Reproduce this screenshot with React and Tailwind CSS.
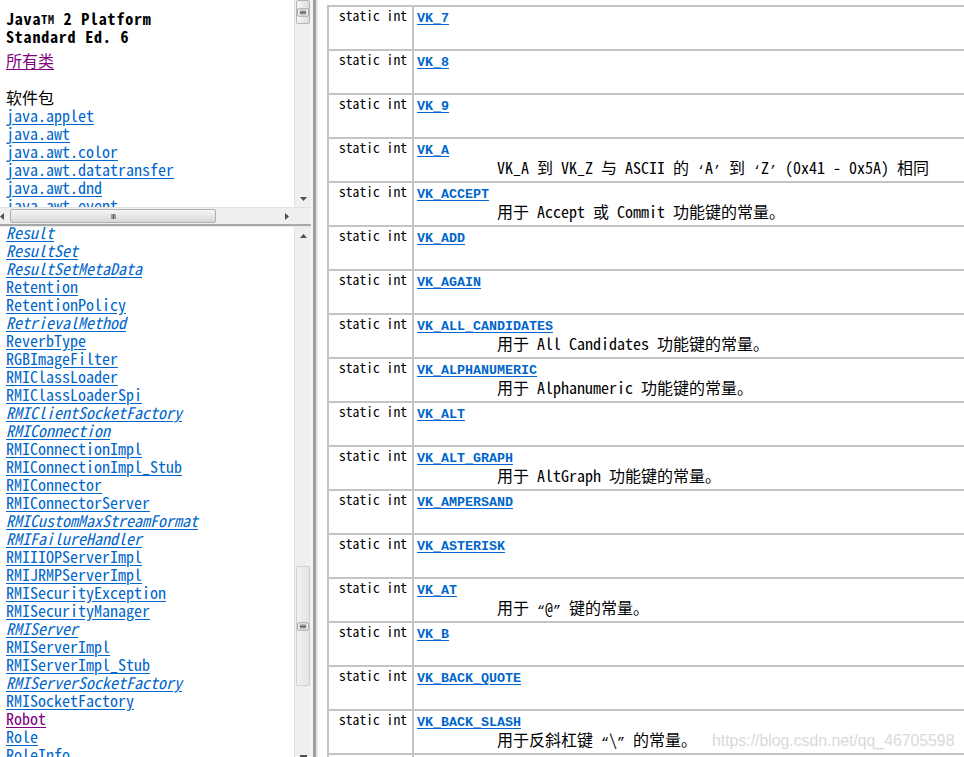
const MONO = "font-['Noto_Sans_Mono_CJK_SC','Liberation_Mono','Noto_Sans_CJK_SC',monospace]";

const classes = [
  ["Result", true], ["ResultSet", true], ["ResultSetMetaData", true], ["Retention"], ["RetentionPolicy"],
  ["RetrievalMethod", true], ["ReverbType"], ["RGBImageFilter"], ["RMIClassLoader"], ["RMIClassLoaderSpi"],
  ["RMIClientSocketFactory", true], ["RMIConnection", true], ["RMIConnectionImpl"], ["RMIConnectionImpl_Stub"],
  ["RMIConnector"], ["RMIConnectorServer"], ["RMICustomMaxStreamFormat", true], ["RMIFailureHandler", true],
  ["RMIIIOPServerImpl"], ["RMIJRMPServerImpl"], ["RMISecurityException"], ["RMISecurityManager"],
  ["RMIServer", true], ["RMIServerImpl"], ["RMIServerImpl_Stub"], ["RMIServerSocketFactory", true],
  ["RMISocketFactory"], ["Robot", false, true], ["Role"], ["RoleInfo"],
];

const packages = ["java.applet", "java.awt", "java.awt.color", "java.awt.datatransfer", "java.awt.dnd", "java.awt.event"];

// narrow quote marks, as the old javadoc font draws them half width
const Q = ({ children }) => <span className="font-['Liberation_Mono',monospace] text-[13.3px]">{children}</span>;

const fields = [
  ["VK_7"], ["VK_8"], ["VK_9"],
  ["VK_A", <>VK_A 到 VK_Z 与 ASCII 的 <Q>‘</Q>A<Q>’</Q> 到 <Q>‘</Q>Z<Q>’</Q> (0x41 - 0x5A) 相同</>],
  ["VK_ACCEPT", "用于 Accept 或 Commit 功能键的常量。"],
  ["VK_ADD"], ["VK_AGAIN"],
  ["VK_ALL_CANDIDATES", "用于 All Candidates 功能键的常量。"],
  ["VK_ALPHANUMERIC", "用于 Alphanumeric 功能键的常量。"],
  ["VK_ALT"],
  ["VK_ALT_GRAPH", "用于 AltGraph 功能键的常量。"],
  ["VK_AMPERSAND"], ["VK_ASTERISK"],
  ["VK_AT", <>用于 <Q>“</Q>@<Q>”</Q> 键的常量。</>],
  ["VK_B"], ["VK_BACK_QUOTE"],
  ["VK_BACK_SLASH", <>用于反斜杠键 <Q>“</Q>\<Q>”</Q> 的常量。</>],
  [""],
];

function Grip({ vertical }) {
  return vertical ? (
    <svg width="13" height="9" viewBox="0 0 13 9">
      <rect x="0.5" y="0.5" width="12" height="8" rx="1.5" fill="#f4f4f4" stroke="#9a9a9a" />
      <path d="M3 3h7M3 4.5h7M3 6h7" stroke="#555" strokeWidth="1" />
    </svg>
  ) : (
    <svg width="9" height="9" viewBox="0 0 9 9">
      <path d="M3 2v5M4.5 2v5M6 2v5" stroke="#555" strokeWidth="1" />
    </svg>
  );
}

function Arrow({ dir }) {
  const d = {
    down: "M0 0h7L3.5 4z",
    up: "M0 4h7L3.5 0z",
    right: "M0 0v7L4 3.5z",
    left: "M4 0v7L0 3.5z",
  }[dir];
  const w = dir === "left" || dir === "right" ? 4 : 7;
  const h = dir === "left" || dir === "right" ? 7 : 4;
  return (
    <svg width={w} height={h} viewBox={`0 0 ${w} ${h}`}>
      <path d={d} fill="#505050" />
    </svg>
  );
}

export default function App() {
  return (
    <div className={`relative w-[964px] h-[757px] overflow-hidden flex bg-white text-black ${MONO}`}>
      {/* left frames */}
      <div className="w-[311px] shrink-0 flex flex-col">
        {/* packages frame */}
        <div className="h-[226px] shrink-0 flex flex-col border-b-2 border-[#a8a8a8]">
          <div className="flex-1 min-h-0 flex">
            <div className="flex-1 overflow-hidden pl-[6px] pt-[9px]">
              <div className="font-bold text-[16px] leading-[18px] whitespace-nowrap tracking-[0.8px]">
                <div>
                  Java<sup className="text-[12px] relative -top-[1px]">TM</sup> 2 Platform
                </div>
                <div>Standard Ed. 6</div>
              </div>
              <div className="mt-[6px] text-[16px] leading-[18px]">
                <span className="text-[#800080] underline underline-offset-2">所有类</span>
              </div>
              <div className="mt-[19px] text-[16px] leading-[18px]">软件包</div>
              <div className="text-[16px] leading-[18px]">
                {packages.map((p) => (
                  <div key={p}>
                    <span className="text-[#0066cc] underline underline-offset-2">{p}</span>
                  </div>
                ))}
              </div>
            </div>
            <div className="w-[17px] shrink-0 bg-[#efefef] border-l border-[#e2e2e2] flex flex-col">
              <div className="h-[24px] mx-[1px] rounded-[2px] bg-gradient-to-r from-[#f6f6f6] to-[#dcdcdc] border border-[#b4b4b4] flex items-center justify-center">
                <Grip vertical />
              </div>
              <div className="flex-1" />
              <div className="h-[17px] flex items-center justify-center">
                <Arrow dir="down" />
              </div>
            </div>
          </div>
          <div className="h-[17px] shrink-0 flex bg-[#efefef] border-t border-[#e2e2e2]">
            <div className="w-[10px] flex items-center justify-start">
              <Arrow dir="left" />
            </div>
            <div className="w-[206px] my-[1px] rounded-[2px] bg-gradient-to-b from-[#f6f6f6] to-[#d8d8d8] border border-[#b0b0b0] flex items-center justify-center">
              <Grip />
            </div>
            <div className="flex-1 flex items-center justify-end pr-[5px]">
              <Arrow dir="right" />
            </div>
            <div className="w-[17px] bg-[#efefef]" />
          </div>
        </div>
        {/* classes frame */}
        <div className="flex-1 min-h-0 flex border-t border-[#e8e8e8]">
          <div className="flex-1 overflow-hidden pl-[6px]">
            <div className="-mt-[4px] text-[16px] leading-[18px] whitespace-nowrap">
              {classes.map(([name, italic, visited]) => (
                <div key={name}>
                  <span
                    className={`underline underline-offset-2 ${italic ? "italic" : ""} ${
                      visited ? "text-[#800080]" : "text-[#0066cc]"
                    }`}
                  >
                    {name}
                  </span>
                </div>
              ))}
            </div>
          </div>
          <div className="w-[17px] shrink-0 bg-[#efefef] border-l border-[#e2e2e2] flex flex-col">
            <div className="h-[17px] flex items-center justify-center">
              <Arrow dir="up" />
            </div>
            <div className="h-[322px]" />
            <div className="h-[120px] mx-[1px] rounded-[2px] bg-gradient-to-r from-[#f2f2f2] to-[#e4e4e4] border border-[#d0d0d0] flex items-center justify-center">
              <Grip vertical />
            </div>
            <div className="flex-1" />
            <div className="h-[6px] flex items-end justify-center">
              <div className="w-[7px] h-[2px] bg-[#505050]" />
            </div>
          </div>
        </div>
      </div>

      {/* frame divider */}
      <div className="w-[7px] shrink-0 flex">
        <div className="w-[2px] bg-[#f4f4f4]" />
        <div className="w-[3px] bg-[#a0a0a0]" />
        <div className="w-[2px] bg-[#e6e6e6]" />
      </div>

      {/* right frame */}
      <div className="flex-1 overflow-hidden pl-[9px] pt-[5px]">
        <div className="w-[700px] border-l-2 border-[#c4c4c4]">
          {fields.map(([name, desc], i) => (
            <div key={i} className="flex h-[44px] border-t-2 border-[#c4c4c4]">
              <div className="w-[85px] shrink-0 border-r-2 border-[#c4c4c4] text-right pr-[5px] pt-0 text-[13.6px] leading-[16px] whitespace-nowrap">
                {name ? "static int" : ""}
              </div>
              <div className="flex-1 pl-[3px] pt-[4px] whitespace-nowrap">
                <div className="font-['Liberation_Mono',monospace] text-[13.33px] leading-[16px] font-bold">
                  <span className="text-[#0066cc] underline underline-offset-2">{name}</span>
                </div>
                {desc && <div className="ml-[80px] -mt-[1px] text-[16px] leading-[18px]">{desc}</div>}
              </div>
            </div>
          ))}
        </div>
      </div>

      {/* watermark */}
      <div className="absolute left-[712px] top-[729px] text-[15.8px] text-[#d9d9d9] font-['Liberation_Sans',sans-serif] whitespace-nowrap">
        https://blog.csdn.net/qq_46705598
      </div>
    </div>
  );
}
